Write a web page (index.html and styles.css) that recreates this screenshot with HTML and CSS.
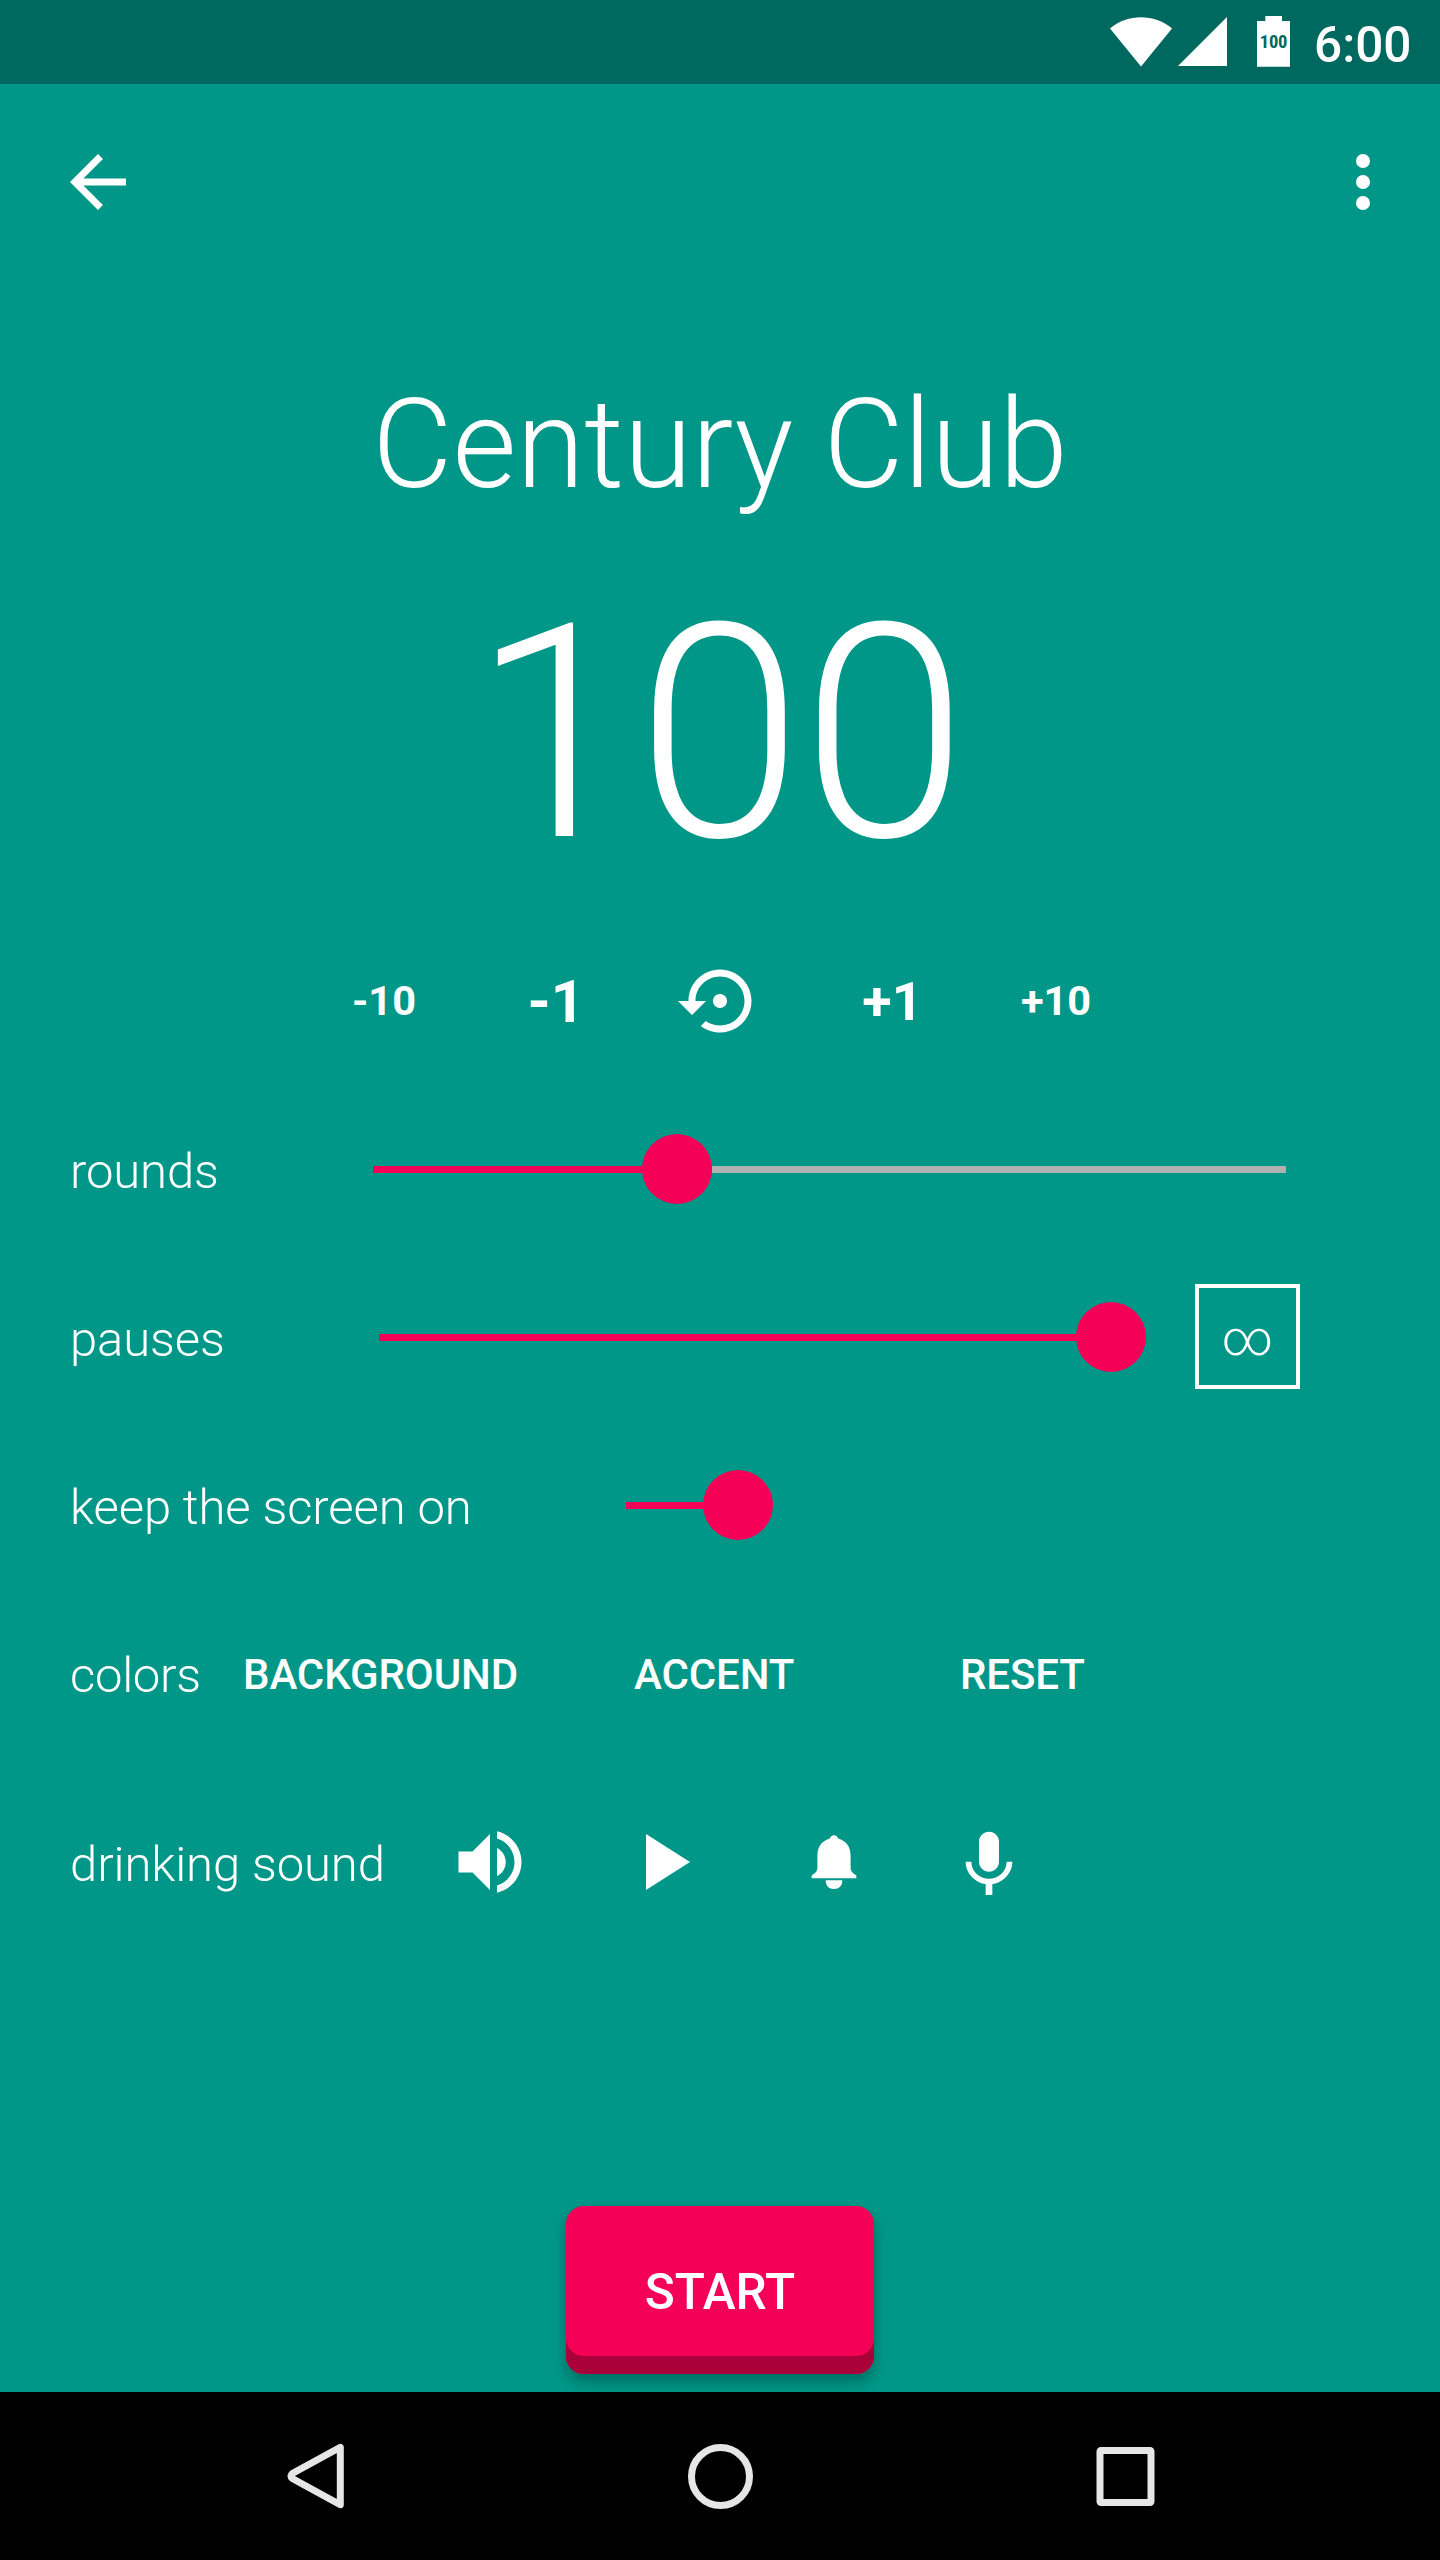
FILE: index.html
```html
<!DOCTYPE html>
<html lang="en">
<head>
<meta charset="utf-8">
<title>Century Club</title>
<link rel="stylesheet" href="styles.css">
</head>
<body>
<header class="status">
  <svg class="wifi" width="62" height="50" viewBox="0 0 62 50"><path d="M0 11.500C9 4 20 0.300 31 0.300S53 4 62 11.500L31 49.500z"/></svg>
  <svg class="signal" width="49" height="49" viewBox="0 0 49 49"><path d="M0 49H49V0z"/></svg>
  <div class="battery"><svg width="33" height="51" viewBox="0 0 33 51"><path d="M0 5H8.300V0H25V5H33V50.700H0z"/></svg><span class="level">100</span></div>
  <span class="clock">6:00</span>
</header>
<nav class="appbar">
  <svg width="84" height="84" viewBox="0 0 24 24"><path d="M20 11H7.830l5.590-5.590L12 4l-8 8 8 8 1.410-1.410L7.830 13H20v-2z"/></svg>
  <svg width="84" height="84" viewBox="0 0 24 24"><circle cx="12" cy="6" r="2"/><circle cx="12" cy="12" r="2"/><circle cx="12" cy="18" r="2"/></svg>
</nav>
<main class="main">
  <h1 class="title">Century Club</h1>
  <div class="count">100</div>
  <div class="steps">
    <span class="step m10">-10</span>
    <span class="step m1">-1</span>
    <svg width="84" height="84" viewBox="0 0 24 24"><path d="M14 12c0-1.100-.9-2-2-2s-2 .9-2 2 .9 2 2 2 2-.9 2-2zm-2-9c-4.970 0-9 4.030-9 9H0l4 4 4-4H5c0-3.870 3.130-7 7-7s7 3.130 7 7-3.130 7-7 7c-1.510 0-2.910-.49-4.060-1.300l-1.420 1.440C8.040 20.300 9.940 21 12 21c4.970 0 9-4.030 9-9s-4.030-9-9-9z"/></svg>
    <span class="step p1">+1</span>
    <span class="step p10">+10</span>
  </div>
  <div class="row rounds">
    <span class="label">rounds</span>
    <div class="slider"><div class="fill"></div><div class="thumb"></div><div class="rest"></div></div>
  </div>
  <div class="row pauses">
    <span class="label">pauses</span>
    <div class="slider"><div class="fill"></div><div class="thumb"></div></div>
    <div class="box"><span class="inf">∞</span></div>
  </div>
  <div class="row screen">
    <span class="label">keep the screen on</span>
    <div class="slider"><div class="fill"></div><div class="thumb"></div></div>
  </div>
  <div class="row colors">
    <span class="label">colors</span>
    <span class="flat">BACKGROUND</span>
    <span class="flat">ACCENT</span>
    <span class="flat">RESET</span>
  </div>
  <div class="row sound">
    <span class="label">drinking sound</span>
    <svg width="84" height="84" viewBox="0 0 24 24"><path d="M3 9v6h4l5 5V4L7 9H3zm13.500 3c0-1.770-1.020-3.290-2.500-4.030v8.050c1.480-.73 2.500-2.250 2.500-4.020zM14 3.230v2.060c2.890.86 5 3.540 5 6.710s-2.110 5.850-5 6.710v2.060c4.010-.91 7-4.490 7-8.770s-2.990-7.860-7-8.770z"/></svg>
    <svg width="96" height="96" viewBox="0 0 24 24"><path d="M8 5v14l11-7z"/></svg>
    <svg width="84" height="84" viewBox="0 0 84 84"><path d="M42 15.300c2.200 0 3.300 1.300 4.200 3.300C54 21 58.600 26.500 58.600 36V47c0 4 1.500 6 5.700 8.300V58.300H19.700V55.300C23.900 53 25.400 51 25.400 47V36C25.400 26.500 30 21 37.800 18.600C38.700 16.600 39.800 15.300 42 15.300zM33.700 60.300H50.300C50.300 66 47 69 42 69S33.700 66 33.700 60.300z"/></svg>
    <svg class="mic" width="80" height="80" viewBox="0 0 24 24"><path d="M12 14c1.660 0 2.990-1.340 2.990-3L15 5c0-1.660-1.340-3-3-3S9 3.340 9 5v6c0 1.660 1.340 3 3 3zm5.300-3c0 3-2.540 5.100-5.300 5.100S6.700 14 6.700 11H5c0 3.410 2.720 6.230 6 6.720V21h2v-3.280c3.280-.48 6-3.300 6-6.720h-1.700z"/></svg>
  </div>
  <button class="start">START</button>
</main>
<footer class="navbar">
  <svg width="64" height="72" viewBox="0 0 64 72"><path d="M56.300 7.300V64.700L8.300 38.500Q5.500 36 8.300 33.500z"/></svg>
  <svg width="72" height="72" viewBox="0 0 72 72"><circle cx="35.500" cy="36.500" r="29"/></svg>
  <svg width="66" height="66" viewBox="0 0 66 66"><rect x="6" y="7.500" width="51" height="52" rx="1"/></svg>
</footer>
</body>
</html>
```
FILE: styles.css
```css
* { box-sizing: border-box; }
body {
  margin: 0;
  width: 1440px;
  height: 2560px;
  display: flex;
  flex-direction: column;
  overflow: hidden;
  background: #009788;
  color: #fff;
  font-family: Roboto, sans-serif;
  white-space: nowrap;
}
svg { display: block; flex: none; fill: #fff; }
.status {
  height: 84px;
  background: #00695f;
  display: flex;
  align-items: flex-start;
  padding-left: 1110px;
}
.wifi, .signal { margin-top: 17px; }
.signal { margin-left: 6px; }
.battery { display: grid; margin: 16px 0 0 30px; width: 33px; height: 51px; }
.battery > * { grid-area: 1 / 1; }
.level {
  color: #00695f;
  font-size: 18.500px;
  font-weight: 700;
  font-stretch: 75%;
  line-height: 22px;
  letter-spacing: -0.200px;
  padding-top: 15px;
  justify-self: center;
}
.clock { font-size: 49.500px; font-weight: 500; line-height: 60px; margin: 15px 0 0 24px; }
.appbar {
  height: 196px;
  display: flex;
  justify-content: space-between;
  align-items: center;
  padding: 0 35px 0 56px;
}
.main { height: 2112px; display: flex; flex-direction: column; }
.title {
  margin: 90px 0 0;
  font-size: 123.500px;
  font-weight: 300;
  line-height: 150px;
  text-align: center;
}
.count {
  margin-top: 64px;
  padding-right: 2px;
  font-size: 299px;
  font-weight: 300;
  line-height: 300px;
  letter-spacing: -1px;
  text-align: center;
}
.steps {
  margin-top: 75px;
  height: 84px;
  display: grid;
  grid-template-columns: repeat(5, 168px);
  justify-content: center;
  justify-items: center;
  align-items: center;
}
.step { font-weight: 700; line-height: 60px; }
.m10, .p10 { font-size: 41.500px; }
.m1 { font-size: 59px; padding: 2px 0 0 8px; }
.p1 { font-size: 54px; padding: 2px 0 0 9px; }
.row {
  height: 168px;
  padding-left: 70px;
  display: grid;
  align-items: center;
  justify-content: start;
}
.label { font-size: 49px; font-weight: 300; line-height: 60px; letter-spacing: -0.100px; padding-top: 6px; }
.rounds { margin-top: 42px; grid-template-columns: 303px 913px; }
.pauses { grid-template-columns: 309px 816px 105px; }
.screen { grid-template-columns: 556px 147px; }
.slider { display: flex; align-items: center; height: 70px; }
.fill { height: 7px; background: #f50057; margin-right: -1px; margin-top: 1px; }
.rounds .fill { width: 270px; }
.pauses .fill { width: 698px; }
.screen .fill { width: 78px; }
.thumb { width: 70px; height: 70px; border-radius: 50%; background: #f50057; }
.rest { flex: 1; height: 7px; margin-top: 1px; background: #b1b1b1; }
.box {
  height: 105px;
  margin-bottom: 1px;
  border: 4px solid #fff;
  display: flex;
  align-items: center;
  justify-content: center;
}
.inf { font-size: 49px; font-weight: 300; line-height: 60px; padding-top: 5px; }
.flat { font-size: 42px; font-weight: 500; line-height: 60px; padding-top: 3px; letter-spacing: -0.100px; }
.colors { grid-template-columns: 173px 391px 326px 200px; }
.colors .label { letter-spacing: -0.300px; }
.sound { height: 210px; grid-template-columns: 378px 166px 178px 157px 80px; }
.mic { margin-top: 6px; }
.start {
  flex: none;
  align-self: center;
  margin: 239px 0 0;
  width: 308px;
  height: 168px;
  padding: 4px 0 0;
  border: 0;
  border-radius: 18px;
  background: #f50057;
  box-shadow: inset 0 -18px #aa0039, 0 7px 14px rgba(0, 0, 0, 0.300);
  color: #fff;
  font: 500 49.500px/60px Roboto, sans-serif;
}
.navbar {
  position: relative;
  height: 168px;
  background: #000;
  display: grid;
  grid-template-columns: 64px 72px 66px;
  column-gap: 337px;
  justify-content: start;
  align-items: center;
  padding-left: 284px;
}
.navbar svg { fill: none; stroke: #e6e6e6; stroke-width: 7; stroke-linejoin: round; }
```
